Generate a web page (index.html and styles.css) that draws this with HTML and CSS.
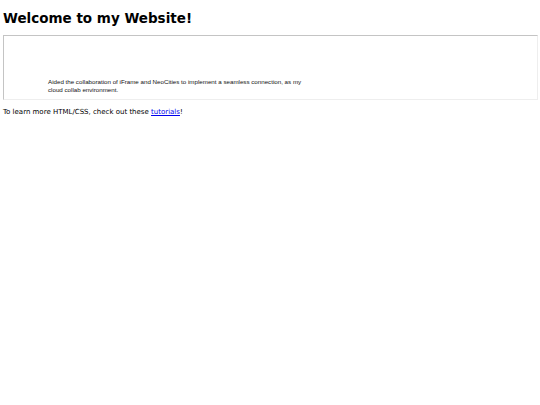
FILE: index.html
```html
<!DOCTYPE html>
<html>
<head>
<meta charset="utf-8">
<link rel="stylesheet" href="styles.css">
</head>
<body>
<h1 class="title">Welcome to my Website!</h1>
<div class="frame">
  <p class="frame-text">Aided the collaboration of iFrame and NeoCities to implement a seamless connection, as my cloud collab environment.</p>
</div>
<p class="note">To learn more HTML/CSS, check out these <a class="link" href="#">tutorials</a>!</p>
</body>
</html>
```
FILE: styles.css
```css
html, body {
  margin: 0;
  padding: 0;
  background: #fff;
}
body {
  padding: 4px 2px 0 3px;
  font-family: "DejaVu Sans", Verdana, sans-serif;
  color: #000;
}
.title {
  margin: 5px 0 8px 0;
  font-size: 13.5px;
  font-weight: bold;
  line-height: 18px;
}
.frame {
  border-style: solid;
  border-width: 1px;
  border-color: #c4c4c4 #eeeeee #eeeeee #c4c4c4;
  display: flex;
  align-items: flex-end;
  padding: 0 0 5px 44px;
  box-sizing: border-box;
  height: 65px;
}
.frame-text {
  margin: 0;
  width: 258px;
  font-family: "Liberation Sans", Arial, sans-serif;
  font-size: 6.2px;
  line-height: 8px;
  color: #111;
}
.note {
  margin: 7px 0 0 0;
  font-size: 7px;
  line-height: 10px;
}
.link {
  color: #0000ee;
}
```
